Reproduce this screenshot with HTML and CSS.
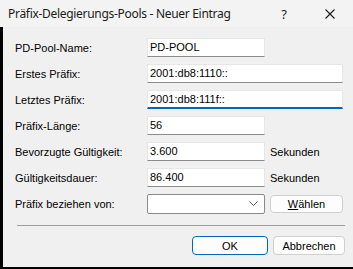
FILE: index.html
```html
<!DOCTYPE html>
<html lang="de">

<head>
    <meta charset="UTF-8">
    <title>Präfix-Delegierungs-Pools - Neuer Eintrag</title>
    <link rel="stylesheet" href="styles.css">
</head>

<body>
    <div class="dialog">
        <div class="titlebar">
            <span class="title">Präfix-Delegierungs-Pools - Neuer Eintrag</span>
            <span class="help">?</span>
            <span class="close">
                <svg width="10" height="10" viewBox="0 0 10 10">
                    <path d="M0.5 0.5 L9.5 9.5 M9.5 0.5 L0.5 9.5" stroke="#1a1a1a" stroke-width="1.1" fill="none"/>
                </svg>
            </span>
        </div>

        <div class="content">
            <div class="fields">
                <label>PD-Pool-Name:</label>
                <div class="input short">PD-POOL</div>

                <label>Erstes Präfix:</label>
                <div class="input wide">2001:db8:1110::</div>

                <label>Letztes Präfix:</label>
                <div class="input wide focused">2001:db8:111f::</div>

                <label>Präfix-Länge:</label>
                <div class="input short">56</div>

                <label>Bevorzugte Gültigkeit:</label>
                <div class="input">3.600</div>
                <span class="unit">Sekunden</span>

                <label>Gültigkeitsdauer:</label>
                <div class="input">86.400</div>
                <span class="unit">Sekunden</span>

                <label>Präfix beziehen von:</label>
                <div class="combo">
                    <svg width="9" height="5" viewBox="0 0 9 5">
                        <path d="M0.5 0.5 L4.5 4.5 L8.5 0.5" stroke="#555" stroke-width="1" fill="none"/>
                    </svg>
                </div>
                <button class="btn"><u>W</u>ählen</button>
            </div>

            <hr class="separator">

            <div class="actions">
                <button class="btn ok">OK</button>
                <button class="btn">Abbrechen</button>
            </div>
        </div>
    </div>
</body>

</html>
```

FILE: styles.css
```css
* {
    margin: 0;
    padding: 0;
    box-sizing: border-box;
}

body {
    width: 353px;
    height: 269px;
    background: #f0f0f0;
    font-family: 'Liberation Sans', Arial, sans-serif;
    font-size: 11px;
    color: #000;
    overflow: hidden;
}

.dialog {
    display: flex;
    flex-direction: column;
    height: 269px;
}

/* title bar */
.titlebar {
    height: 27px;
    display: flex;
    align-items: center;
    background: #f3f3f3;
    padding-left: 8px;
    font-family: 'Noto Sans', 'Open Sans', sans-serif;
    font-size: 12px;
    letter-spacing: -0.3px;
    color: #1a1a1a;
}

.title {
    flex: 1;
}

.help {
    width: 46px;
    text-align: center;
    font-size: 13px;
}

.close {
    width: 46px;
    display: flex;
    justify-content: center;
    align-items: center;
}

/* client area */
.content {
    flex: 1;
    border-left: 3px solid #000;
    border-bottom: 2px solid #000;
    padding: 11px 10px 0 12px;
}

.fields {
    display: grid;
    grid-template-columns: 127px 118px 73px;
    grid-auto-rows: 19px;
    column-gap: 5px;
    row-gap: 7px;
    align-items: center;
}

.fields label {
    grid-column: 1;
}

.input {
    height: 19px;
    background: #fff;
    border: 1px solid #e6e6e6;
    border-bottom-color: #8c8c8c;
    padding: 0 2px;
    line-height: 17px;
    white-space: nowrap;
}

.input.wide {
    grid-column: 2 / 4;
}

.input.short {
    grid-column: 2;
}

.input.focused {
    border-bottom: 2px solid #0067c0;
    line-height: 16px;
}

.unit {
    padding-left: 0;
}

.combo {
    height: 20px;
    background: #fff;
    border: 1px solid #8a8a8a;
    border-radius: 2px;
    display: flex;
    justify-content: flex-end;
    align-items: center;
    padding-right: 6px;
}

.btn {
    height: 18px;
    background: #fdfdfd;
    border: 1px solid #d0d0d0;
    border-radius: 4px;
    font-family: 'Liberation Sans', Arial, sans-serif;
    font-size: 11px;
    color: #000;
}

.separator {
    border: none;
    border-top: 1px solid #a0a0a0;
    margin: 12px 0 10px 2px;
    width: 328px;
}

.actions {
    display: flex;
    justify-content: flex-end;
    gap: 5px;
    width: 330px;
}

.actions .btn {
    width: 72px;
    height: 19px;
}

.actions .ok {
    width: 76px;
    border-color: #0067c0;
}
```
